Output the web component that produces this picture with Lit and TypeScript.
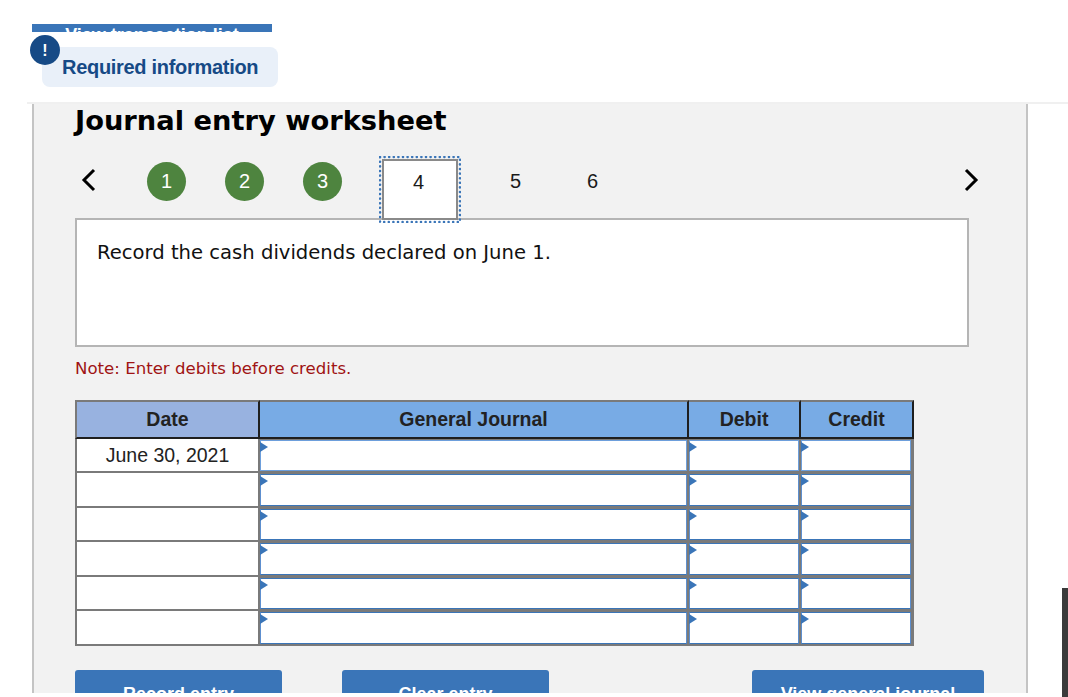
import { LitElement, html, css } from "lit";
import { customElement } from "lit/decorators.js";

const ROWS = ["June 30, 2021", "", "", "", "", ""];

@customElement("app-root")
export class AppRoot extends LitElement {
  static styles = css`
    :host {
      display: block;
      height: 697px;
      background: #fff;
      font-family: "Liberation Sans", Arial, sans-serif;
    }
    .wrap {
      position: relative;
      height: 697px;
    }
    .page {
      position: relative;
      height: 693px;
      overflow: hidden;
    }
    .txn {
      box-sizing: border-box;
      width: 240px;
      height: 8px;
      margin: 24px 0 0 32px;
      overflow: hidden;
      background: #3a75b8;
      color: #fff;
      font-weight: bold;
      font-size: 18px;
      line-height: 22px;
      text-align: center;
    }
    .badge {
      position: absolute;
      left: 30px;
      top: 35px;
      width: 30px;
      height: 30px;
      border-radius: 50%;
      background: #164a86;
      color: #fff;
      font-weight: bold;
      font-size: 16px;
      line-height: 31px;
      text-align: center;
    }
    .pill {
      box-sizing: border-box;
      width: 236px;
      height: 40px;
      margin: 15px 0 0 42px;
      padding-left: 20px;
      border-radius: 8px;
      background: #e9f0f9;
      color: #164a86;
      font-weight: bold;
      font-size: 20px;
      letter-spacing: -0.3px;
      line-height: 40px;
    }
    .rule {
      height: 2px;
      margin: 15px 0 0 27px;
      background: #f0f0f0;
    }
    .panel {
      box-sizing: border-box;
      width: 996px;
      height: 589px;
      margin: 0 0 0 32px;
      padding: 1px 0 0 41px;
      border: solid #c4c4c4;
      border-width: 0 2px;
      background: #f2f2f2;
    }
    h1 {
      margin: 0;
      font: bold 27.3px/32px "DejaVu Sans", Verdana, sans-serif;
      color: #000;
    }
    .steps {
      position: relative;
      display: flex;
      align-items: center;
      height: 39px;
      margin-top: 25px;
      font-size: 20px;
    }
    .arrow {
      display: block;
      flex: none;
    }
    .arrow.prev {
      margin: 0 0 4px 6px;
    }
    .arrow.next {
      margin: 0 0 4px 0;
    }
    .step {
      flex: none;
      width: 39px;
      text-align: center;
      color: #1a1a1a;
    }
    .done {
      height: 39px;
      margin-right: 39px;
      border-radius: 50%;
      background: #4e843f;
      color: #fff;
      line-height: 39px;
    }
    .first {
      margin-left: 50px;
    }
    .current {
      position: relative;
      top: 8px;
      z-index: 1;
      box-sizing: border-box;
      width: 76px;
      height: 61px;
      margin-left: 1px;
      padding-right: 3px;
      border: 2px solid #8a8a8a;
      background: #fff;
      line-height: 42px;
    }
    .dots {
      position: absolute;
      left: -5px;
      top: -5px;
      width: 82px;
      height: 67px;
    }
    .after {
      margin-left: 38px;
    }
    .next-wrap {
      margin-left: 351px;
    }
    .prompt {
      box-sizing: border-box;
      width: 894px;
      height: 129px;
      margin-top: 17px;
      padding: 20px 20px;
      border: 2px solid #b5b5b5;
      background: #fff;
      font: 19.6px/26px "DejaVu Sans", Verdana, sans-serif;
      color: #111;
    }
    .note {
      margin-top: 12px;
      font: 16.6px/20px "DejaVu Sans", Verdana, sans-serif;
      color: #a01414;
    }
    .table {
      display: grid;
      grid-template-columns: 185px 429px 112px 113px;
      grid-template-rows: 38.5px repeat(6, 34.5px);
      width: 839px;
      margin-top: 21px;
      background: #7a7a7a;
    }
    .th {
      box-sizing: border-box;
      border-top: 2px solid #7a7a7a;
      border-bottom: 2px solid #1f1f1f;
      border-right: 2px solid #1f1f1f;
      background: #78abe5;
      color: #222;
      font-weight: bold;
      font-size: 19.5px;
      line-height: 35px;
      text-align: center;
    }
    .th.date {
      border-left: 2px solid #7a7a7a;
      background: #98b2e0;
    }
    .date-cell {
      margin: 0 2px 2px 2px;
      background: #fff;
      color: #222;
      font-size: 19.5px;
      line-height: 32px;
      text-align: center;
    }
    .cell {
      position: relative;
      box-sizing: border-box;
      margin: 1px 2.5px 2px 0;
      border: solid #5d8fcf;
      border-width: 1.5px 1px;
      border-top-color: #3a75b8;
      border-bottom-color: #3a75b8;
      background: #fff;
    }
    .cell.top {
      border-color: #6d9fdc;
    }
    .cell.end {
      margin-right: 3px;
    }
    .flag {
      position: absolute;
      left: -1px;
      top: 1px;
      width: 0;
      height: 0;
      border-style: solid;
      border-width: 5px 0 5px 8px;
      border-color: transparent transparent transparent #3a75b8;
    }
    .actions {
      display: flex;
      margin-top: 24.5px;
    }
    .btn {
      height: 40px;
      border-radius: 3px;
      background: #3a75b8;
      color: #fff;
      font-weight: bold;
      font-size: 18px;
      line-height: 48px;
      text-align: center;
    }
    .record,
    .clear {
      width: 207px;
      margin-right: 60px;
    }
    .journal {
      width: 232px;
      margin-left: 143px;
    }
    .scroll {
      position: absolute;
      right: 0;
      top: 588px;
      width: 6px;
      height: 109px;
      background: #3a3a3a;
    }
  `;

  private chevron(d: string, cls: string) {
    return html`<svg class="arrow ${cls}" width="16" height="24" viewBox="0 0 16 24">
      <path d=${d} fill="none" stroke="#000" stroke-width="3"></path>
    </svg>`;
  }

  private inputs(row: number) {
    const top = row === 0 ? "top" : "";
    return html`
      <div class="cell ${top}"><span class="flag"></span></div>
      <div class="cell ${top}"><span class="flag"></span></div>
      <div class="cell end ${top}"><span class="flag"></span></div>
    `;
  }

  render() {
    return html`<div class="wrap">
      <div class="page">
        <div class="txn">View transaction list</div>
        <div class="pill">Required information</div>
        <div class="badge">!</div>
        <div class="rule"></div>
        <section class="panel">
          <h1>Journal entry worksheet</h1>
          <div class="steps">
            ${this.chevron("M13 2 L3 12 L13 22", "prev")}
            <div class="step done first">1</div>
            <div class="step done">2</div>
            <div class="step done">3</div>
            <div class="step current">
              4
              <svg class="dots" viewBox="0 0 82 67">
                <rect
                  x="1"
                  y="1"
                  width="80"
                  height="65"
                  fill="none"
                  stroke="#3a75b8"
                  stroke-width="2.6"
                  stroke-linecap="round"
                  stroke-dasharray="0 4.6"
                ></rect>
              </svg>
            </div>
            <div class="step after">5</div>
            <div class="step after">6</div>
            <div class="next-wrap">${this.chevron("M3 2 L13 12 L3 22", "next")}</div>
          </div>
          <div class="prompt">Record the cash dividends declared on June 1.</div>
          <div class="note">Note: Enter debits before credits.</div>
          <div class="table">
            <div class="th date">Date</div>
            <div class="th">General Journal</div>
            <div class="th">Debit</div>
            <div class="th">Credit</div>
            ${ROWS.map(
              (date, i) => html`<div class="date-cell">${date}</div>${this.inputs(i)}`
            )}
          </div>
          <div class="actions">
            <div class="btn record">Record entry</div>
            <div class="btn clear">Clear entry</div>
            <div class="btn journal">View general journal</div>
          </div>
        </section>
      </div>
      <div class="scroll"></div>
    </div>`;
  }
}
